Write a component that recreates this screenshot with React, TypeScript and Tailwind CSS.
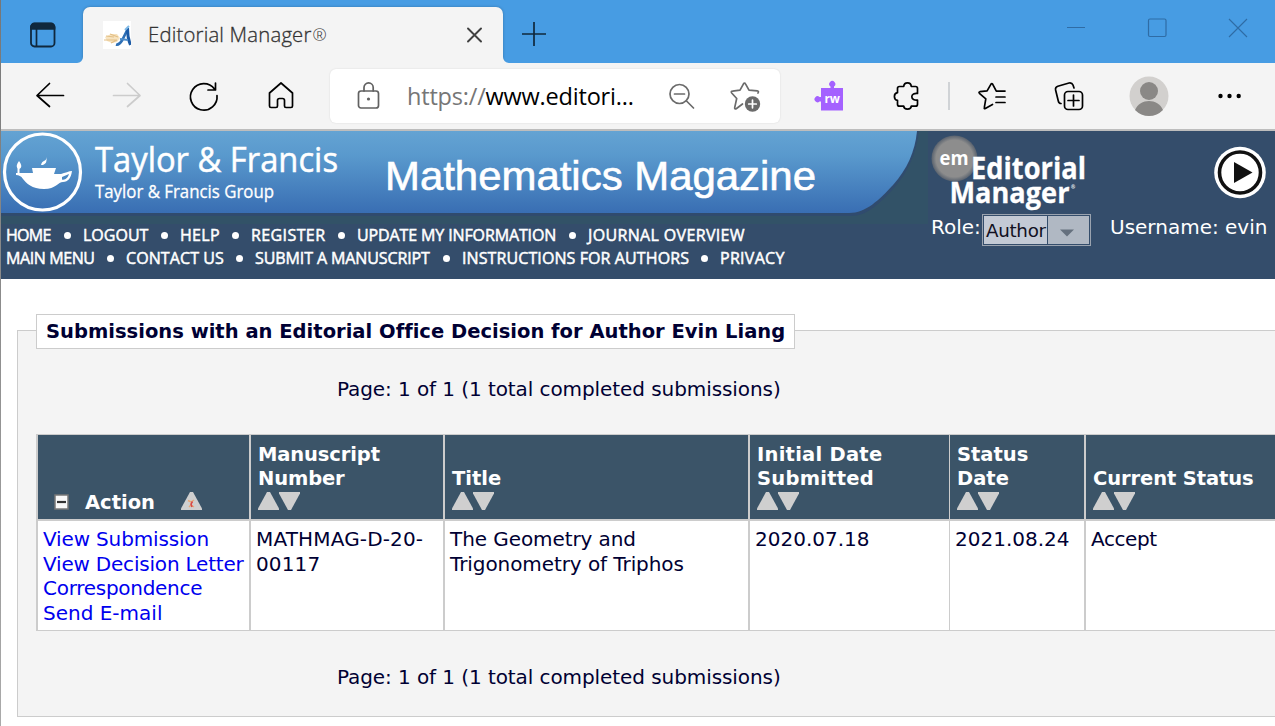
import React from "react";

const uiFont = "font-['Open_Sans','Noto_Sans',sans-serif]";
const bodyFont = "font-['DejaVu_Sans',Verdana,sans-serif]";
const navFont = "font-['Open_Sans','Noto_Sans',sans-serif]";

type IconProps = { className?: string; children: React.ReactNode };

function Icon({ className = "", children }: IconProps) {
  return (
    <svg
      viewBox="0 0 28 28"
      className={`size-7 shrink-0 overflow-visible ${className}`}
      fill="none"
      stroke="currentColor"
      strokeWidth={1.7}
      strokeLinecap="round"
      strokeLinejoin="round"
    >
      {children}
    </svg>
  );
}

function TabStrip() {
  return (
    <div className="flex h-[63px] items-end overflow-hidden bg-[#479ce3]">
      <div className="flex h-[63px] w-[82px] shrink-0 items-center pt-2 pl-[28px]">
        <Icon className="text-[#10283d]">
          <rect x="2" y="1.5" width="23.5" height="23" rx="3.5" strokeWidth="1.8" />
          <path d="M2 7V5a3.5 3.5 0 0 1 3.5-3.5H22A3.500 3.500 0 0 1 25.500 5v2z" fill="currentColor" />
          <path d="M7.500 7v17" />
        </Icon>
      </div>
      <div className="relative flex h-14 w-[420px] shrink-0 items-center rounded-t-[7px] bg-[#f4f4f4] shadow-[0_0_3px_rgba(0,0,0,0.25)]">
        <svg viewBox="0 0 6 6" className="absolute bottom-0 -left-1.5 size-1.5" fill="#f4f4f4"><path d="M6 0v6H0a6 6 0 0 0 6-6z" /></svg>
        <svg viewBox="0 0 6 6" className="absolute -right-1.5 bottom-0 size-1.5" fill="#f4f4f4"><path d="M0 0v6h6a6 6 0 0 1-6-6z" /></svg>
        <svg viewBox="0 0 28 28" className="ml-5 size-7 shrink-0 bg-white">
          <path d="M2 16l6-3 6 0 3 4-3 4-5 1-5-2z" fill="#f7e3bf" />
          <path d="M3 15l8 1M1 19h13M7 13l8 3M8 22l6-3" stroke="#e3bf85" strokeWidth="1.200" />
          <path d="M13 23.500q3 1 6-4l6-12" fill="none" stroke="#2d6fb5" strokeWidth="2.600" />
          <path d="M24.500 7q0 10 3 17" fill="none" stroke="#1c5ba6" strokeWidth="3" />
          <path d="M17 18l8 1" stroke="#4d8dca" strokeWidth="2" />
          <path d="M22 9l4-4" stroke="#7db8e6" strokeWidth="2" />
        </svg>
        <span className={`ml-[17px] w-[300px] pb-0.5 text-[20.300px] font-light tracking-[0.200px] whitespace-nowrap text-[#333333] [-webkit-text-stroke:0.3px_#333333] ${uiFont}`}>
          Editorial Manager<span className="relative -top-px ml-px text-[17px] [-webkit-text-stroke:0px]">®</span>
        </span>
        <svg viewBox="0 0 16 16" className="ml-[19px] size-4 shrink-0" stroke="#404040" strokeWidth="1.900" strokeLinecap="round">
          <path d="M1 1.500l13 13M14 1.500l-13 13" />
        </svg>
      </div>
      <svg viewBox="0 0 26 26" className="mb-4 ml-[18px] size-[26px] shrink-0" stroke="#10283d" strokeWidth="1.700">
        <path d="M1 13h24M13 1v24" />
      </svg>
      <div className="mb-[25px] ml-auto flex items-center gap-[61px] pr-[27px] text-[#2f6ca5]">
        <svg viewBox="0 0 20 20" className="size-5" stroke="currentColor" strokeWidth="1">
          <path d="M1 9.500h18" />
        </svg>
        <svg viewBox="0 0 20 20" className="size-5" fill="none" stroke="currentColor" strokeWidth="1.200">
          <rect x="1.500" y="1" width="17.500" height="17.500" rx="1.500" />
        </svg>
        <svg viewBox="0 0 20 20" className="size-5" stroke="currentColor" strokeWidth="1.100">
          <path d="M1 1l18 18M19 1L1 19" />
        </svg>
      </div>
    </div>
  );
}

function Toolbar() {
  return (
    <div className="flex h-[66px] shrink-0 items-center bg-[#f4f4f4] pl-[35px] text-black">
      <Icon>
        <path d="M27.500 13.500H1M13.500 1.500L1 13.500 13.500 24.500" />
      </Icon>
      <Icon className="ml-[49px] text-[#cccccc]">
        <path d="M.500 13.500H27M14.500 1.500L27 13.500 14.500 24.500" />
      </Icon>
      <Icon className="ml-[49px]">
        <path d="M24.500 7A13.300 13.300 0 1 0 27 13.500M25.500 1v7h-7.500" />
      </Icon>
      <Icon className="ml-[49px]">
        <path d="M14 1L2.500 11v13q0 1.500 1.500 1.500h5q1.500 0 1.500-1.500v-5.500q0-2 2-2h3q2 0 2 2V24q0 1.500 1.500 1.500h5q1.500 0 1.500-1.500V11z" />
      </Icon>
      <div className="ml-[35px] flex h-[54px] w-[450px] shrink-0 items-center rounded-md bg-white shadow-[0_0_2px_rgba(0,0,0,0.12)]">
        <Icon className="ml-[25px] text-[#616161]">
          <rect x="3.500" y="9" width="20" height="17" rx="2.500" />
          <path d="M9 9V5.500a4.600 4.600 0 0 1 9.200 0V9" />
          <circle cx="13.500" cy="17" r="1.600" fill="currentColor" stroke="none" />
        </Icon>
        <span className={`ml-6 w-[261px] pt-0.5 text-[23.500px] tracking-[-0.200px] whitespace-nowrap text-black ${uiFont}`}>
          <span className="text-[#767676]">https://</span>www.editori...
        </span>
        <Icon className="text-[#6b6b6b]">
          <circle cx="11.500" cy="12" r="9.500" />
          <path d="M18.500 19l7 7M6.500 12h10" />
        </Icon>
        <Icon className="ml-[35px] text-[#6b6b6b]">
          <path d="M11.500 22l-6.300 4.700c-1 .5-1.700 0-1.500-1l2-9.200-5-5.500c-.8-1-.4-1.800.8-1.900l7.500-.9 3.500-6.400c.6-1 1.500-1 2 0l3.500 6.300 8.300.7c1.200.1 1.500 1.200.7 2.200" />
          <circle cx="21.500" cy="22" r="7.700" fill="currentColor" stroke="none" />
          <path d="M21.500 18.200v7.600M17.700 22h7.600" stroke="#fff" />
        </Icon>
      </div>
      <svg viewBox="0 0 28 28" className="ml-[35px] size-7 shrink-0 overflow-visible">
        <path d="M6 6h9.500V4.500a3 3 0 1 1 3.500 0V6h9v22.500H6V19.500H4.500a3 3 0 1 1 0-4.500H6z" fill="#a461ff" />
        <text x="9.500" y="21" fill="white" fontSize="13" fontWeight="700" textLength="15.500" lengthAdjust="spacingAndGlyphs" className={uiFont}>rw</text>
      </svg>
      <Icon className="ml-[50px]">
        <path d="M6.500 4.500h4.200C10.900 2 12 .8 14.500.8s3.600 1.200 3.800 3.700H22.500q2 0 2 2V11.500c-3-.3-5.700.8-5.700 3.300S21.500 18.300 24.500 18v4.200q0 2-2 2h-4.200c-.2 2-1.300 3-3.800 3s-3.600-1-3.800-3H6.500q-2 0-2-2v-3.900C2.500 18 1.400 16.500 1.400 14.500s1.100-3.500 3.100-3.800V6.500q0-2 2-2z" />
      </Icon>
      <div className="ml-[27px] h-7 w-0.5 shrink-0 bg-[#d0d3d6]" />
      <Icon className="ml-7">
        <path d="M14.500 22.500l-7.200 4q-1.300.5-1-.8l1.500-8.900-6.400-5.500q-1-1.200.5-1.600l7.200-.8 3.900-6.800q.8-1 1.600 0l3.700 7H27M18 15h9M18 20.500h9" />
      </Icon>
      <Icon className="ml-[49px]">
        <rect x="9.500" y="9.500" width="18" height="18" rx="3.500" />
        <path d="M18.500 13v11M13 18.500h11M6 21.500c-1.500 0-2.300-.8-2.700-2.500L.6 8C.2 6 1 4.800 2.800 4.200L14 1c2-.4 3.300.3 4 2l1 3" />
      </Icon>
      <svg viewBox="0 0 40 40" className="ml-[46px] size-10 shrink-0">
        <circle cx="20" cy="20" r="19.500" fill="#d2d0ce" />
        <circle cx="20" cy="15" r="9" fill="#8a8886" />
        <path d="M6 34C11 22 29 22 34 34A19.500 19.500 0 0 1 6 34z" fill="#8a8886" />
      </svg>
      <Icon className="ml-[47px]">
        <g fill="currentColor" stroke="none">
          <circle cx="4.500" cy="14" r="2.200" />
          <circle cx="13.500" cy="14" r="2.200" />
          <circle cx="22.700" cy="14" r="2.200" />
        </g>
      </Icon>
    </div>
  );
}

function Banner() {
  return (
    <svg viewBox="1 131 927 93" className="block h-[93px] w-[927px]">
      <defs>
        <linearGradient id="sky" x1="0" y1="0" x2="0" y2="1">
          <stop offset="0" stopColor="#64a3d3" />
          <stop offset="0.300" stopColor="#5999cd" />
          <stop offset="1" stopColor="#396eb3" />
        </linearGradient>
      </defs>
      <rect x="1" y="131" width="927" height="93" fill="#325267" />
      <path d="M1 131h918c-3 24-12 42-25 57-15 16-27 28-43 28H1z" fill="#304b6e" />
      <path d="M1 131h916c-2 21-10 38-24 54-14 15-27 28-44 28H1z" fill="url(#sky)" />
      <circle cx="42.500" cy="172" r="38" fill="none" stroke="white" strokeWidth="3.200" />
      <path d="M32 168h24l-2 6h7c4-1 8-3 11-3-1 7-4 11-9 11-5 0-7 7-19 7s-18-6-21-10c-2-3-4-4-7-4v-2h17z" fill="white" />
      <path d="M62 179.500c3 1 6-2 7-5.500l-7 3z" fill="#4b88c2" />
      <path d="M19 161c-3 4-3 7 0 8 3-1 3-4 0-8z" fill="white" />
      <path d="M18.500 166v9" stroke="white" strokeWidth="2" />
      <path d="M41 165c1-5 5-3 6-8-1 5 0 6-4 8z" fill="white" />
      <g fill="white">
        <text x="95" y="172" fontSize="34" stroke="white" strokeWidth="0.500" textLength="243" lengthAdjust="spacingAndGlyphs" className="font-['Open_Sans','Noto_Sans',sans-serif]">Taylor &amp; Francis</text>
        <text x="95" y="198" fontSize="17.500" stroke="white" strokeWidth="0.300" textLength="179" lengthAdjust="spacingAndGlyphs" className="font-['Open_Sans','Noto_Sans',sans-serif]">Taylor &amp; Francis Group</text>
        <text x="385" y="190" fontSize="41" stroke="white" strokeWidth="0.600" textLength="431" lengthAdjust="spacingAndGlyphs" className="font-['Liberation_Sans',Arial,sans-serif]">Mathematics Magazine</text>
      </g>
    </svg>
  );
}

const navRows = [
  [
    { label: "HOME", box: "w-[45px] tracking-[-0.700px]" },
    { label: "LOGOUT", box: "w-[65px] tracking-[0px]" },
    { label: "HELP", box: "w-[39px] tracking-[0.300px]" },
    { label: "REGISTER", box: "w-[74px] tracking-[0.400px]" },
    { label: "UPDATE MY INFORMATION", box: "w-[199px] tracking-[-0.120px]" },
    { label: "JOURNAL OVERVIEW", box: "w-[158px] tracking-[0.350px]" },
  ],
  [
    { label: "MAIN MENU", box: "w-[88px] tracking-[-0.400px]" },
    { label: "CONTACT US", box: "w-[97px] tracking-[0.100px]" },
    { label: "SUBMIT A MANUSCRIPT", box: "w-[175px] tracking-[-0.100px]" },
    { label: "INSTRUCTIONS FOR AUTHORS", box: "w-[226px] tracking-[0.100px]" },
    { label: "PRIVACY", box: "w-[66px] tracking-[0.300px]" },
  ],
];

function Navigation() {
  return (
    <nav className={`pl-[5px] text-[16px] leading-[23px] text-white [-webkit-text-stroke:0.5px_white] ${navFont}`}>
      {navRows.map((row, r) => (
        <div key={r} className="flex h-[23px] items-center">
          {row.map((item, i) => (
            <React.Fragment key={item.label}>
              {i > 0 && (
                <span className="flex w-8 shrink-0 justify-center pb-px">
                  <span className="size-[7px] rounded-full bg-white" />
                </span>
              )}
              <a className={`shrink-0 whitespace-nowrap ${item.box}`}>{item.label}</a>
            </React.Fragment>
          ))}
        </div>
      ))}
    </nav>
  );
}

function AccountArea() {
  return (
    <div className={`flex-1 ${bodyFont}`}>
      <svg viewBox="928 131 347 83" className="block h-[83px] w-[347px]">
        <defs>
          <radialGradient id="badge">
            <stop offset="0.800" stopColor="#8d8d8d" />
            <stop offset="1" stopColor="#59626e" />
          </radialGradient>
        </defs>
        <circle cx="954.500" cy="158.500" r="23" fill="url(#badge)" />
        <g fill="white" stroke="white" strokeWidth="0.300" fontWeight="700" className="font-['Open_Sans','Noto_Sans',sans-serif]">
          <text x="939.500" y="165" fontSize="20" textLength="29" lengthAdjust="spacingAndGlyphs" strokeWidth="0">em</text>
          <text x="971" y="178.500" fontSize="31" textLength="115" lengthAdjust="spacingAndGlyphs">Editorial</text>
          <text x="949.500" y="202.500" fontSize="29" textLength="120" lengthAdjust="spacingAndGlyphs">Manager</text>
          <text x="1071" y="189" fontSize="5" strokeWidth="0">®</text>
        </g>
        <circle cx="1240" cy="172.500" r="25.800" fill="white" />
        <circle cx="1240" cy="172.500" r="20.500" fill="none" stroke="#111" strokeWidth="3.600" />
        <path d="M1234 162l18.500 10.500L1234 183z" fill="#111" />
      </svg>
      <div className="flex h-8 items-start pl-[3px] text-[20px] leading-[26px] whitespace-nowrap text-white">
        <span className="w-[51px] shrink-0">Role:</span>
        <div className="flex h-8 w-[109px] shrink-0 border border-[#9aa3af] bg-[#344d6b] p-px">
          <span className="w-[63px] shrink-0 overflow-hidden bg-[#c3cad5] pl-0.5 text-[18.300px] leading-[30px] tracking-[-0.300px] text-[#111122]">Author</span>
          <span className="ml-px flex flex-1 items-center justify-center bg-[#b0b8c3] pt-1.5 pr-1">
            <svg viewBox="0 0 14 8" className="h-2 w-3.5"><path d="M0 .500h14l-7 7z" fill="#65707e" /></svg>
          </span>
        </div>
        <span className="ml-[19px] shrink-0">Username: evin</span>
      </div>
    </div>
  );
}

function SortArrows() {
  return (
    <svg viewBox="0 0 42 18" className="block h-[18px] w-[42px]" fill="#cfcfcf">
      <path d="M0 18v-1.500L9 0h3l9 16.500V18z" />
      <path d="M21 0h21v1.500L33 18h-3L21 1.500z" />
    </svg>
  );
}

const columns = [
  { lines: ["Manuscript", "Number"], edge: "border-l-2", head: "tracking-[-0.120px]", fit: "tracking-[0.150px]", value: ["MATHMAG-D-20-", "00117"] },
  { lines: ["Title"], edge: "border-l-2", head: "tracking-[0px]", fit: "tracking-[-0.080px]", value: ["The Geometry and", "Trigonometry of Triphos"] },
  { lines: ["Initial Date", "Submitted"], edge: "border-l-2", head: "tracking-[0.250px]", fit: "tracking-[0px]", value: ["2020.07.18"] },
  { lines: ["Status", "Date"], edge: "border-l", head: "tracking-[0px]", fit: "tracking-[0px]", value: ["2021.08.24"] },
  { lines: ["Current Status"], edge: "border-l-2", head: "tracking-[-0.100px]", fit: "tracking-[-0.400px]", value: ["Accept"] },
];

const actions = [
  { label: "View Submission", fit: "tracking-[-0.150px]" },
  { label: "View Decision Letter", fit: "tracking-[-0.200px]" },
  { label: "Correspondence", fit: "tracking-[-0.280px]" },
  { label: "Send E-mail", fit: "tracking-[0px]" },
];

function SubmissionsTable() {
  return (
    <div className="grid w-[1239px] grid-cols-[213px_194px_305px_201px_135px_191px] border-t border-b border-[#cccccc] whitespace-nowrap">
      <div className="flex h-[84px] items-end border-l-2 border-[#cccccc] bg-[#3b5468] pb-1 pl-4 text-[19.500px] font-bold text-white">
        <svg viewBox="0 0 15 16" className="mb-[5px] h-4 w-[15px]">
          <rect x="1" y="1" width="13" height="14" fill="#f8f8f8" stroke="#777" strokeWidth="1.500" />
          <path d="M3 8h9" stroke="#333" strokeWidth="2.200" />
        </svg>
        <span className="ml-4 w-[96px] leading-6">Action</span>
        <svg viewBox="0 0 21 18" className="mb-[5px] h-[18px] w-[21px]">
          <path d="M0 18v-1.500L9 0h3l9 16.500V18z" fill="#cfcfcf" />
          <path d="M7 8.500l3 1.500 3-2M8 15l2-2 3 2" fill="none" stroke="#e8a878" strokeWidth="1.500" />
          <path d="M11.500 9.500l-1.500 2.500 1 3" fill="none" stroke="#d84848" strokeWidth="1.500" />
        </svg>
      </div>
      {columns.map((c) => (
        <div key={c.lines[0]} className={`flex h-[84px] flex-col justify-end border-[#cccccc] bg-[#3b5468] pb-[9px] pl-[7px] text-[19.500px] leading-6 font-bold text-white ${c.edge} ${c.head}`}>
          {c.lines.map((l) => <span key={l}>{l}</span>)}
          <span className="mt-px"><SortArrows /></span>
        </div>
      ))}
      <div className="h-[111px] border-t-2 border-l-2 border-[#cccccc] bg-white pt-1.5 pl-[5px] text-[20px] leading-[24.600px] text-[#0000ee]">
        {actions.map((a) => <a key={a.label} className={`block ${a.fit}`}>{a.label}</a>)}
      </div>
      {columns.map((c) => (
        <div key={c.lines[0]} className={`h-[111px] border-t-2 border-[#cccccc] bg-white pt-1.5 pl-[5px] text-[20px] leading-[24.600px] ${c.edge} ${c.fit}`}>
          {c.value.map((v) => <span key={v} className="block">{v}</span>)}
        </div>
      ))}
    </div>
  );
}

function PageCount() {
  return <p className="pl-[319px] text-[20px] leading-6 tracking-[-0.080px] whitespace-nowrap">Page: 1 of 1 (1 total completed submissions)</p>;
}

export default function App() {
  return (
    <div className="flex h-[726px] w-[1275px] overflow-hidden bg-white">
      <div className="w-px shrink-0 bg-linear-to-b from-[#777] to-[#aaa]" />
      <div className="flex w-[1274px] shrink-0 flex-col">
        <TabStrip />
        <Toolbar />
        <div className="h-0.5 shrink-0 bg-[#bdbdbd]" />
        <header className="flex h-[148px] shrink-0 bg-[#344d6b]">
          <div className="w-[927px] shrink-0">
            <Banner />
            <Navigation />
          </div>
          <AccountArea />
        </header>
        <main className={`pt-[51px] pl-4 text-[#000033] ${bodyFont}`}>
          <section className="h-[387px] w-[1300px] border border-[#cccccc] bg-[#f4f4f4] pl-[18px]">
            <h2 className="-mt-[17px] h-[35px] w-[759px] border border-[#cccccc] bg-white pl-[9px] text-[19.500px] leading-[33px] font-bold tracking-[0.015px] whitespace-nowrap">
              Submissions with an Editorial Office Decision for Author Evin Liang
            </h2>
            <div className="-ml-[18px] pt-7"><PageCount /></div>
            <div className="pt-[33px]"><SubmissionsTable /></div>
            <div className="-ml-[18px] pt-[34px]"><PageCount /></div>
          </section>
        </main>
      </div>
    </div>
  );
}
